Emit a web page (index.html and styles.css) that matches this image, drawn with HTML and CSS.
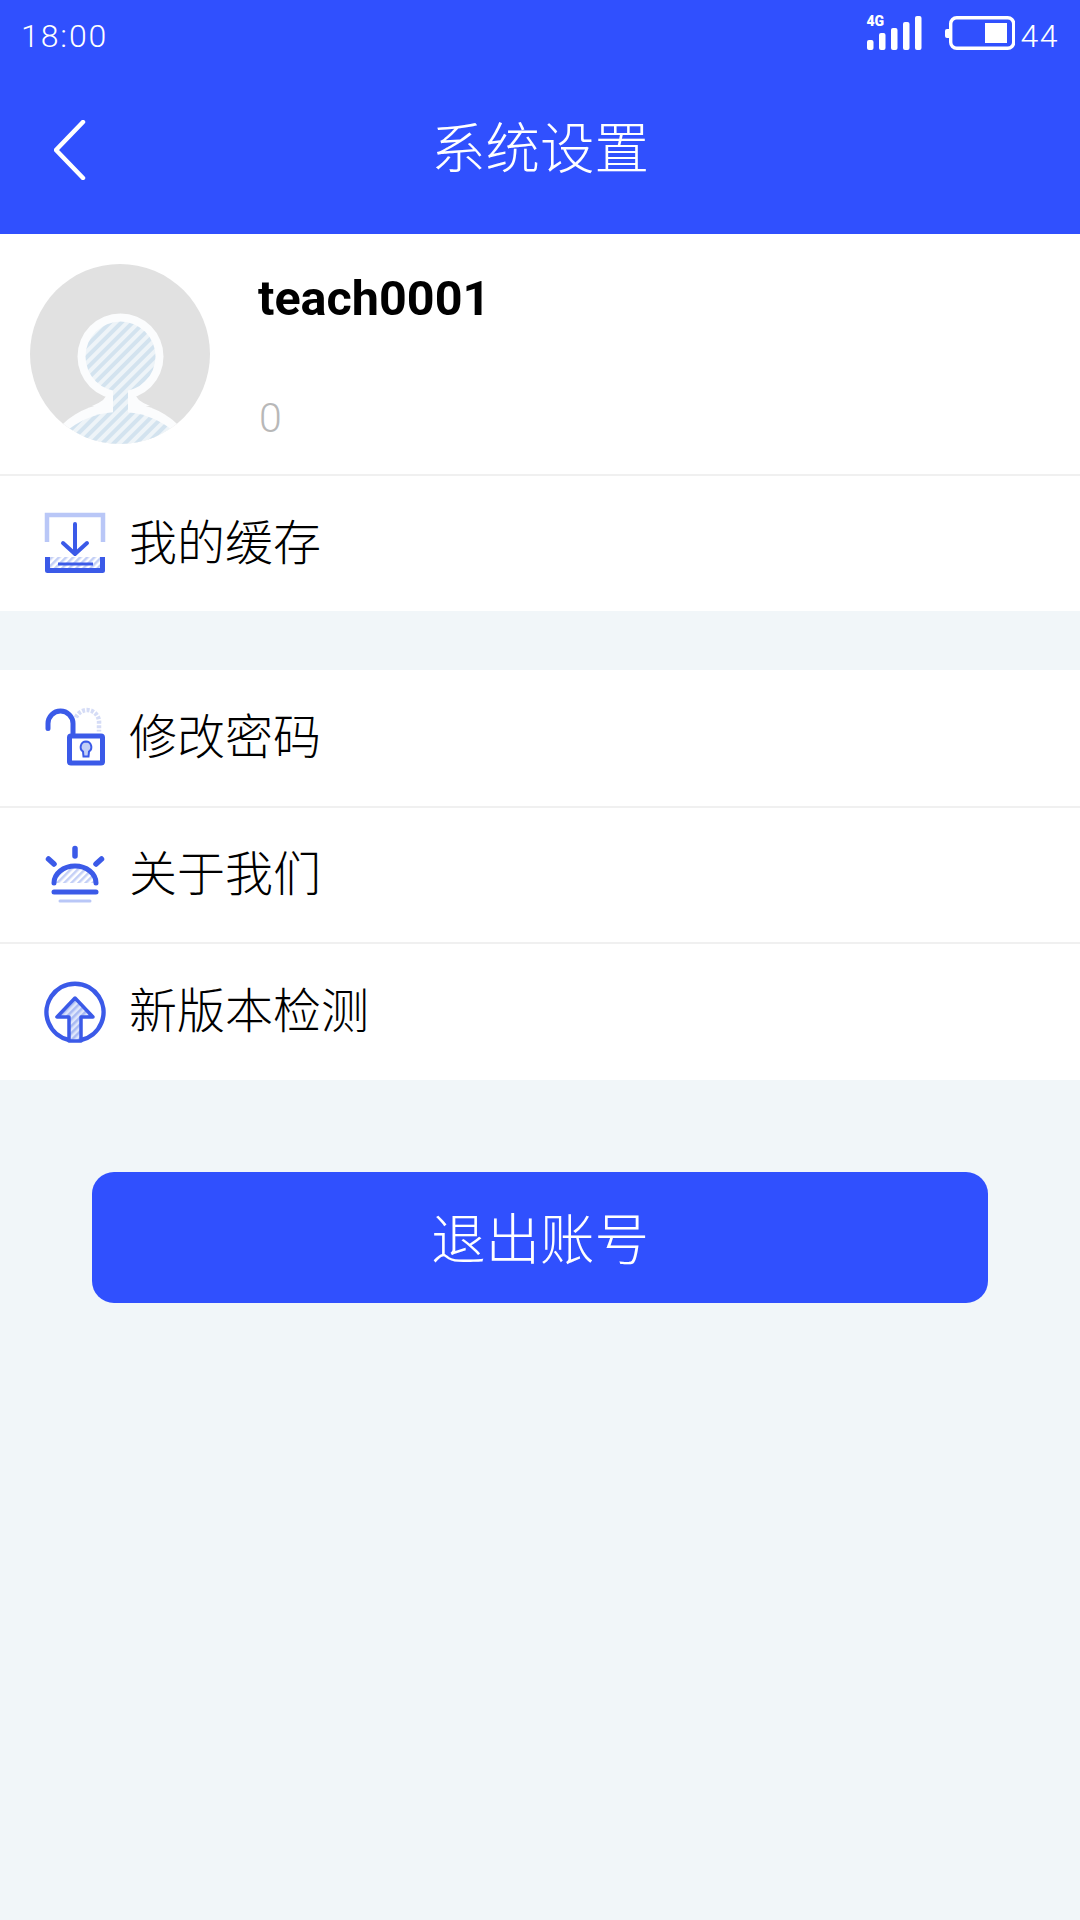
FILE: index.html
```html
<!DOCTYPE html>
<html lang="zh">
<head>
  <meta charset="UTF-8" />
  <meta name="viewport" content="width=device-width, initial-scale=1.0"/>
  <title>系统设置</title>
  <link rel="stylesheet" href="styles.css">
</head>
<body>
  <!-- 顶部蓝色区域 -->
  <header class="top">
    <div class="status-bar">
      <span class="time">18:00</span>
      <div class="status-right">
        <div class="signal">
          <span class="net">4G</span>
          <svg width="56" height="36" viewBox="0 0 56 36">
            <rect x="0" y="24" width="6.5" height="10" rx="2" fill="#fff"/>
            <rect x="12" y="17" width="6.5" height="17" rx="2" fill="#fff"/>
            <rect x="24" y="12" width="6.5" height="22" rx="2" fill="#fff"/>
            <rect x="36" y="6" width="6.5" height="28" rx="2" fill="#fff"/>
            <rect x="48" y="0" width="6.5" height="34" rx="2" fill="#fff"/>
          </svg>
        </div>
        <svg class="battery" width="70" height="34" viewBox="0 0 70 34">
          <rect x="0" y="13" width="6" height="9" rx="2" fill="#fff"/>
          <rect x="5.7" y="1.7" width="63" height="30.6" rx="6" fill="none" stroke="#fff" stroke-width="3.4"/>
          <rect x="40" y="7" width="22" height="20" fill="#fff"/>
        </svg>
        <span class="level">44</span>
      </div>
    </div>
    <div class="nav">
      <svg class="back" width="32" height="60" viewBox="0 0 32 60">
        <path d="M29 2 L2 30 L29 58" fill="none" stroke="#fff" stroke-width="4.5" stroke-linecap="round" stroke-linejoin="round"/>
      </svg>
      <h1 class="nav-title">系统设置</h1>
    </div>
  </header>

  <!-- 用户信息 -->
  <section class="profile">
    <svg class="avatar" width="180" height="180" viewBox="0 0 180 180">
      <defs>
        <pattern id="avatarHatch" width="8" height="8" patternUnits="userSpaceOnUse" patternTransform="rotate(45)">
          <rect width="8" height="8" fill="#eef4f8"/>
          <rect width="4" height="8" fill="#d3e3ef"/>
        </pattern>
        <clipPath id="avatarClip"><circle cx="90" cy="90" r="90"/></clipPath>
      </defs>
      <circle cx="90" cy="90" r="90" fill="#e1e1e1"/>
      <g clip-path="url(#avatarClip)">
        <ellipse cx="90" cy="211" rx="80" ry="73" fill="#fbfcfd"/>
        <path d="M77 115 V129 Q77 136 62 142 H120 Q105 136 105 129 V115 Z" fill="#fbfcfd"/>
        <circle cx="90.5" cy="92.5" r="43" fill="#fbfcfd"/>
        <ellipse cx="90" cy="203" rx="70" ry="55" fill="url(#avatarHatch)"/>
        <rect x="83" y="120" width="15" height="32" fill="url(#avatarHatch)"/>
        <circle cx="90.5" cy="92.5" r="35" fill="url(#avatarHatch)"/>
      </g>
    </svg>
    <div class="profile-text">
      <div class="username">teach0001</div>
      <div class="score">0</div>
    </div>
  </section>

  <!-- 菜单 -->
  <ul class="menu">
    <li class="menu-item">
      <svg class="menu-icon" width="60" height="60" viewBox="0 1 60 60">
        <defs>
          <pattern id="hatchA" width="5" height="5" patternUnits="userSpaceOnUse" patternTransform="rotate(45)">
            <rect width="5" height="5" fill="#fff"/>
            <rect width="2.5" height="5" fill="#c3cff6"/>
          </pattern>
        </defs>
        <path d="M2 29 V2 H58 V29" fill="none" stroke="#b9c7f7" stroke-width="4.5"/>
        <rect x="4" y="44" width="52" height="12" fill="url(#hatchA)"/>
        <path d="M30 11 V40 M18 30 L30 41 L42 30" fill="none" stroke="#3b5ae8" stroke-width="4" stroke-linecap="round" stroke-linejoin="round"/>
        <path d="M2.5 44 V57.5 H57.5 V44" fill="none" stroke="#3b5ae8" stroke-width="5" stroke-linejoin="round"/>
        <path d="M13 51 H48" stroke="#3b5ae8" stroke-width="3"/>
      </svg>
      <span>我的缓存</span>
    </li>
  </ul>

  <ul class="menu menu-second">
    <li class="menu-item">
      <svg class="menu-icon" width="60" height="60" viewBox="0 -0.5 60 60">
        <path d="M31 9 A12 12 0 0 1 54 15 V23" fill="none" stroke="#d5dcf6" stroke-width="4.5" stroke-dasharray="3 1.5"/>
        <path d="M3 20 V15 A12.5 12.5 0 0 1 28 15 V25" fill="none" stroke="#3b5ae8" stroke-width="5" stroke-linecap="round"/>
        <rect x="24.5" y="27.5" width="33" height="27" rx="1.5" fill="#fff" stroke="#3b5ae8" stroke-width="5"/>
        <path d="M41 33 A5.5 5.5 0 0 1 44 43 L43.5 48 H38.5 L38 43 A5.5 5.5 0 0 1 41 33 Z" fill="#c3cff6" stroke="#3b5ae8" stroke-width="2"/>
      </svg>
      <span>修改密码</span>
    </li>
    <li class="menu-item">
      <svg class="menu-icon" width="60" height="60" viewBox="0 1 60 60">
        <defs>
          <pattern id="hatchB" width="5" height="5" patternUnits="userSpaceOnUse" patternTransform="rotate(45)">
            <rect width="5" height="5" fill="#fff"/>
            <rect width="2.5" height="5" fill="#c3cff6"/>
          </pattern>
        </defs>
        <path d="M30 4.5 V12 M3.5 15 L9 20 M56.5 15 L51 20" fill="none" stroke="#3b5ae8" stroke-width="5.5" stroke-linecap="round"/>
        <path d="M9 39 A21 17 0 0 1 51 39 Z" fill="url(#hatchB)"/>
        <path d="M9 39 A21 17 0 0 1 51 39" fill="none" stroke="#3b5ae8" stroke-width="5" stroke-linecap="round"/>
        <path d="M9 48 H51" stroke="#3b5ae8" stroke-width="5" stroke-linecap="round"/>
        <path d="M15 57 H45" stroke="#b9c7f7" stroke-width="3" stroke-linecap="round"/>
      </svg>
      <span>关于我们</span>
    </li>
    <li class="menu-item">
      <svg class="menu-icon" width="60" height="60" viewBox="0 2 60 60">
        <defs>
          <pattern id="hatchC" width="5" height="5" patternUnits="userSpaceOnUse" patternTransform="rotate(45)">
            <rect width="5" height="5" fill="#dfe6fb"/>
            <rect width="2.5" height="5" fill="#a9baf3"/>
          </pattern>
        </defs>
        <path d="M24 60 A28.5 28.5 0 1 1 36 60" fill="none" stroke="#3b5ae8" stroke-width="4.5"/>
        <path d="M30 18 L12 37 H24 V61 H36 V37 H48 Z" fill="url(#hatchC)" stroke="#3b5ae8" stroke-width="3.5" stroke-linejoin="round"/>
      </svg>
      <span>新版本检测</span>
    </li>
  </ul>

  <div class="logout-wrap">
    <button class="logout">退出账号</button>
  </div>
</body>
</html>
```

FILE: styles.css
```css
* {
  box-sizing: border-box;
}

html, body {
  margin: 0;
  padding: 0;
}

body {
  width: 1080px;
  height: 1920px;
  overflow: hidden;
  background: #f1f6f9;
  font-family: "Noto Sans CJK SC", "Roboto", sans-serif;
}

/* 顶部 */
.top {
  height: 234px;
  background: #3050fe;
  color: #fff;
}

.status-bar {
  height: 70px;
  display: flex;
  justify-content: space-between;
  align-items: flex-start;
  padding: 16px 21px 0 21px;
}

.time, .level {
  font-family: "Roboto", sans-serif;
  font-weight: 300;
  font-size: 32px;
  line-height: 40px;
  letter-spacing: 1.9px;
}

.level {
  letter-spacing: 1.5px;
}

.status-right {
  display: flex;
  align-items: flex-start;
}

.signal {
  position: relative;
  width: 56px;
  height: 36px;
  margin-right: 22px;
}

.signal svg {
  display: block;
}

.net {
  position: absolute;
  left: 0;
  top: -2px;
  font-family: "Roboto", sans-serif;
  font-weight: 900;
  font-size: 14px;
  line-height: 14px;
}

.battery {
  margin-right: 6px;
}

.nav {
  height: 164px;
  position: relative;
  display: flex;
  align-items: center;
  justify-content: center;
  padding-bottom: 14px;
}

.back {
  position: absolute;
  left: 54px;
  top: 50px;
}

.nav-title {
  margin: 0;
  font-weight: 300;
  font-size: 54.5px;
  line-height: 70px;
}

/* 用户信息 */
.profile {
  height: 242px;
  background: #fff;
  border-bottom: 2px solid #f0f0f0;
  display: flex;
  padding: 30px 0 0 30px;
}

.avatar {
  display: block;
  flex-shrink: 0;
}

.profile-text {
  margin-left: 48px;
}

.username {
  font-family: "Roboto", sans-serif;
  font-weight: 700;
  font-size: 48.5px;
  line-height: 56px;
  color: #000;
  margin-top: 7px;
}

.score {
  font-family: "Roboto", sans-serif;
  font-weight: 300;
  font-size: 41px;
  line-height: 48px;
  color: #b8b8b8;
  margin-top: 67px;
  padding-left: 1px;
}

/* 菜单 */
.menu {
  list-style: none;
  margin: 0;
  padding: 0;
  background: #fff;
}

.menu-second {
  margin-top: 59px;
}

.menu-item {
  height: 136px;
  display: flex;
  align-items: center;
  padding-left: 45px;
  border-bottom: 2px solid #f0f0f0;
  font-weight: 300;
  font-size: 48px;
  color: #000;
}

/* 我的缓存 这一行底部没有分割线,第二组第一行略高 */
.menu:first-of-type .menu-item {
  height: 135px;
}

.menu-second .menu-item:first-child {
  height: 138px;
}

.menu-item span {
  position: relative;
  top: -5px;
}

.menu-item:last-child {
  border-bottom: none;
}

.menu-icon {
  display: block;
  margin-right: 24px;
  flex-shrink: 0;
  overflow: visible;
}

/* 退出 */
.logout-wrap {
  padding: 92px 92px 0;
}

.logout {
  display: block;
  width: 896px;
  height: 131px;
  border: none;
  border-radius: 22px;
  background: #3050fe;
  color: #fff;
  font-family: inherit;
  font-weight: 300;
  font-size: 54.5px;
  line-height: 60px;
  padding: 0 0 4px;
}
```
